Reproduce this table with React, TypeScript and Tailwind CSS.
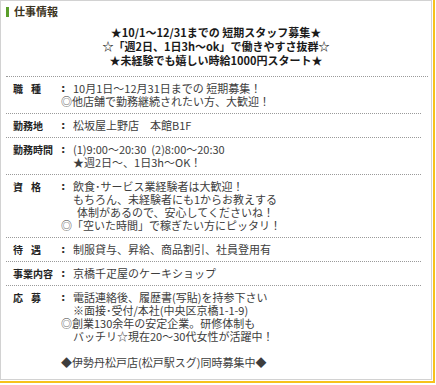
import React from "react";

type Line = { t: string; indent?: "out" | "in" | "none" };
type Row = { label: React.ReactNode; lines: Line[] };

const two = (a: string, b: string) => (
  <span className="flex">
    <span>{a}</span>
    <span className="ml-[8px]">{b}</span>
  </span>
);

const rows: Row[] = [
  {
    label: two("職", "種"),
    lines: [
      { t: "10月1日～12月31日までの 短期募集！" },
      { t: "◎他店舗で勤務継続されたい方、大歓迎！", indent: "out" },
    ],
  },
  { label: "勤務地", lines: [{ t: "松坂屋上野店　本館B1F" }] },
  {
    label: "勤務時間",
    lines: [{ t: "(1)9:00～20:30  (2)8:00～20:30" }, { t: "★週2日～、1日3h～OK！" }],
  },
  {
    label: two("資", "格"),
    lines: [
      { t: "飲食･サービス業経験者は大歓迎！" },
      { t: "もちろん、未経験者にも1からお教えする" },
      { t: "体制があるので、安心してくださいね！", indent: "in" },
      { t: "◎「空いた時間」で稼ぎたい方にピッタリ！", indent: "out" },
    ],
  },
  { label: two("待", "遇"), lines: [{ t: "制服貸与、昇給、商品割引、社員登用有" }] },
  { label: "事業内容", lines: [{ t: "京橋千疋屋のケーキショップ" }] },
  {
    label: two("応", "募"),
    lines: [
      { t: "電話連絡後、履歴書(写貼)を持参下さい" },
      { t: "※面接･受付/本社(中央区京橋1-1-9)" },
      { t: "◎創業130余年の安定企業。研修体制も", indent: "out" },
      { t: "バッチリ☆現在20～30代女性が活躍中！" },
      { t: "\u00a0" },
      { t: "◆伊勢丹松戸店(松戸駅スグ)同時募集中◆", indent: "out" },
    ],
  },
];

export default function App() {
  return (
    <div className="w-[436px] h-[385px] bg-white font-['Noto_Sans_CJK_JP','Noto_Sans',sans-serif]">
      <div className="w-[435px] h-[383px] border-r-2 border-b-2 border-[#f6c21c]">
        <div className="w-[432px] h-[380px] border border-[#d2d2d2] bg-white">
          <div className="h-[21px] flex items-center pl-[5px] gap-[5px]">
            <span className="w-[3px] h-[10px] bg-[#5a9e2a]" />
            <span className="text-[11px] font-bold text-[#3b3220] leading-none">仕事情報</span>
          </div>
          <div className="pt-[3px] pb-[9px] text-center text-[11px] font-bold leading-[14px] text-[#1a1a1a]">
            <div>★10/1～12/31までの 短期スタッフ募集★</div>
            <div>☆「週2日、1日3h～ok」で働きやすさ抜群☆</div>
            <div>★未経験でも嬉しい時給1000円スタート★</div>
          </div>
          <div className="ml-[5px] w-[422px] border-t border-dotted border-[#9a9a9a]" />
          <div className="ml-[5px] w-[415px]">
            {rows.map((r, i) => (
              <div
                key={i}
                className={
                  "flex py-[5px] text-[11px] leading-[13px] text-[#3d3d3d] " +
                  (i < rows.length - 1 ? "border-b border-dotted border-[#9a9a9a]" : "")
                }
              >
                <div className="w-[55px] pl-[7px] text-[10px] font-bold text-[#222]">{r.label}</div>
                <div className="w-[12px] font-bold text-[#333] font-['DejaVu_Sans',sans-serif]">:</div>
                <div className="flex-1">
                  {r.lines.map((l, j) => (
                    <div
                      key={j}
                      className={
                        "whitespace-pre " +
                        (l.indent === "out" ? "-ml-[12px]" : l.indent === "in" ? "pl-[4px]" : "")
                      }
                    >
                      {l.t}
                    </div>
                  ))}
                </div>
              </div>
            ))}
          </div>
        </div>
      </div>
    </div>
  );
}
